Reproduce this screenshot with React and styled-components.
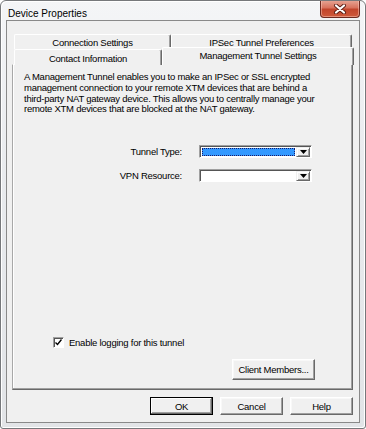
import styled, { createGlobalStyle, css } from "styled-components";

const GlobalStyle = createGlobalStyle`
  html, body {
    margin: 0;
    padding: 0;
    background: #ffffff;
  }
  body {
    font-family: "Liberation Sans", Arial, sans-serif;
    font-size: 9.5px;
    letter-spacing: -0.25px;
    color: #000;
  }
  * {
    box-sizing: border-box;
  }
`;

const Window = styled.div`
  width: 366px;
  height: 429px;
  border: 1px solid #76787b;
  border-radius: 6px 6px 3px 3px;
  background: linear-gradient(180deg, #f4f5f7 0%, #e9ebee 40%, #e2e4e7 100%);
  box-shadow: inset 1px 1px 0 #ffffff, inset -1px -1px 0 #ffffff;
  padding: 0 5px 5px 5px;
  display: flex;
  flex-direction: column;
  overflow: hidden;
`;

const TitleBar = styled.div`
  height: 19px;
  display: flex;
  align-items: flex-start;
  justify-content: space-between;
`;

const Title = styled.div`
  font-size: 10px;
  letter-spacing: 0;
  padding: 7px 0 0 2px;
  line-height: 11px;
  color: #000;
`;

const CloseButton = styled.div`
  width: 40px;
  height: 18px;
  margin-top: -1px;
  border: 1px solid #6e2a20;
  border-top: none;
  border-radius: 0 0 4px 4px;
  background: linear-gradient(180deg, #e8a898 0%, #d9735e 45%, #c2452c 55%, #cf5a3c 100%);
  box-shadow: inset 0 0 0 1px rgba(255, 210, 200, 0.45);
  display: flex;
  align-items: center;
  justify-content: center;
`;

const Client = styled.div`
  flex: 1;
  border: 1px solid #898989;
  background: #f0f0f0;
  padding: 13px 6px 0 5px;
  display: flex;
  flex-direction: column;
`;

const TabStrip = styled.div`
  display: grid;
  grid-template-rows: 15px 15px;
  padding-left: 2px;
  position: relative;
  z-index: 1;
`;

const TabRow = styled.div`
  display: grid;
  grid-template-columns: ${(p) => p.$cols};
  height: 15px;
`;

const Tab = styled.div`
  background: #f0f0f0;
  border-top: 1px solid #ffffff;
  border-left: 1px solid #ffffff;
  border-right: 1px solid #696969;
  box-shadow: inset -1px 0 0 #a0a0a0;
  border-radius: 2px 2px 0 0;
  display: flex;
  align-items: center;
  justify-content: center;
  white-space: nowrap;
  line-height: 11px;
  padding-top: 1px;
  ${(p) =>
    p.$active &&
    css`
      height: 18px;
      margin-top: -2px;
      margin-right: -1px;
      align-items: flex-start;
      padding-top: 2px;
      position: relative;
      z-index: 2;
    `}
`;

const Panel = styled.div`
  flex: 1;
  background: #f0f0f0;
  border-top: 1px solid #ffffff;
  border-left: 1px solid #a8a8a8;
  border-right: 1px solid #696969;
  border-bottom: 1px solid #696969;
  box-shadow: inset -1px -1px 0 #a0a0a0, inset 1px 0 0 #ffffff;
  padding: 7px 0 9px 11px;
  display: flex;
  flex-direction: column;
`;

const Description = styled.p`
  margin: 0;
  width: 302px;
  line-height: 10.8px;
`;

const FieldGrid = styled.div`
  margin-top: 30px;
  display: grid;
  grid-template-columns: 158px 113px;
  column-gap: 17px;
  row-gap: 11px;
  align-items: center;
`;

const FieldLabel = styled.div`
  text-align: right;
  line-height: 13px;
`;

const Combo = styled.div`
  height: 13px;
  background: #ffffff;
  border-top: 1px solid #a0a0a0;
  border-left: 1px solid #a0a0a0;
  border-right: 1px solid #ffffff;
  border-bottom: 1px solid #ffffff;
  box-shadow: inset 1px 1px 0 #555555;
  display: flex;
  padding: 1px 1px 0 1px;
`;

const ComboValue = styled.div`
  flex: 1;
  margin: 1px;
  ${(p) =>
    p.$selected &&
    css`
      background: #3399ff;
      outline: 1px dotted #1a1a6a;
      outline-offset: -1px;
    `}
`;

const ComboArrow = styled.div`
  width: 14px;
  background: #f0f0f0;
  border-top: 1px solid #f0f0f0;
  border-left: 1px solid #f0f0f0;
  border-right: 1px solid #696969;
  border-bottom: 1px solid #696969;
  box-shadow: inset 1px 1px 0 #ffffff, inset -1px -1px 0 #a0a0a0;
  display: flex;
  align-items: center;
  justify-content: center;
`;

const CheckRow = styled.label`
  margin-top: auto;
  margin-left: 29px;
  display: flex;
  align-items: center;
  gap: 5px;
  line-height: 11px;
`;

const CheckBox = styled.span`
  width: 11px;
  height: 11px;
  background: #ffffff;
  border-top: 1px solid #a0a0a0;
  border-left: 1px solid #a0a0a0;
  border-right: 1px solid #ffffff;
  border-bottom: 1px solid #ffffff;
  box-shadow: inset 1px 1px 0 #555555;
  display: flex;
  align-items: center;
  justify-content: center;
`;

const Button = styled.button`
  font: inherit;
  letter-spacing: inherit;
  color: #000;
  white-space: nowrap;
  height: ${(p) => p.$h || 18}px;
  width: ${(p) => p.$w || 63}px;
  padding: 0;
  background: #f0f0f0;
  border: 1px solid;
  border-color: #ffffff #696969 #696969 #ffffff;
  box-shadow: inset -1px -1px 0 #a0a0a0, inset 1px 1px 0 #f8f8f8;
  ${(p) =>
    p.$default &&
    css`
      border: 1px solid #000;
      box-shadow: inset -1px -1px 0 #696969, inset 1px 1px 0 #ffffff, inset -2px -2px 0 #a0a0a0;
    `}
`;

const MembersButton = styled(Button)`
  align-self: flex-end;
  margin: 11px 37px 0 0;
`;

const Footer = styled.div`
  display: flex;
  justify-content: flex-end;
  gap: 7px;
  padding: 7px 0 7px 0;
`;

const DownArrow = () => (
  <svg width="7" height="4" viewBox="0 0 7 4">
    <path d="M0 0h7L3.5 4z" fill="#000" />
  </svg>
);

const CloseGlyph = () => (
  <svg width="14" height="10" viewBox="0 0 14 10">
    <path d="M3 1.5l8 7M11 1.5l-8 7" stroke="#5a1d14" strokeWidth="4" strokeLinecap="round" />
    <path d="M3 1.5l8 7M11 1.5l-8 7" stroke="#ffffff" strokeWidth="2.2" strokeLinecap="round" />
  </svg>
);

const CheckMark = () => (
  <svg width="7" height="7" viewBox="0 0 7 7">
    <path d="M0.5 3.5l2 2 4-5" stroke="#000" strokeWidth="1.4" fill="none" />
  </svg>
);

const ComboBox = ({ selected }) => (
  <Combo>
    <ComboValue $selected={selected} />
    <ComboArrow>
      <DownArrow />
    </ComboArrow>
  </Combo>
);

export default function App() {
  return (
    <>
      <GlobalStyle />
      <Window>
        <TitleBar>
          <Title>Device Properties</Title>
          <CloseButton>
            <CloseGlyph />
          </CloseButton>
        </TitleBar>
        <Client>
          <TabStrip>
            <TabRow $cols="157px 181px">
              <Tab>Connection Settings</Tab>
              <Tab>IPSec Tunnel Preferences</Tab>
            </TabRow>
            <TabRow $cols="148px 191px">
              <Tab>Contact Information</Tab>
              <Tab $active>Management Tunnel Settings</Tab>
            </TabRow>
          </TabStrip>
          <Panel>
            <Description>
              A Management Tunnel enables you to make an IPSec or SSL encrypted management
              connection to your remote XTM devices that are behind a third-party NAT gateway
              device. This allows you to centrally manage your remote XTM devices that are
              blocked at the NAT gateway.
            </Description>
            <FieldGrid>
              <FieldLabel>Tunnel Type:</FieldLabel>
              <ComboBox selected />
              <FieldLabel>VPN Resource:</FieldLabel>
              <ComboBox />
            </FieldGrid>
            <CheckRow>
              <CheckBox>
                <CheckMark />
              </CheckBox>
              Enable logging for this tunnel
            </CheckRow>
            <MembersButton $w={83} $h={21}>Client Members...</MembersButton>
          </Panel>
          <Footer>
            <Button $default>OK</Button>
            <Button>Cancel</Button>
            <Button>Help</Button>
          </Footer>
        </Client>
      </Window>
    </>
  );
}
